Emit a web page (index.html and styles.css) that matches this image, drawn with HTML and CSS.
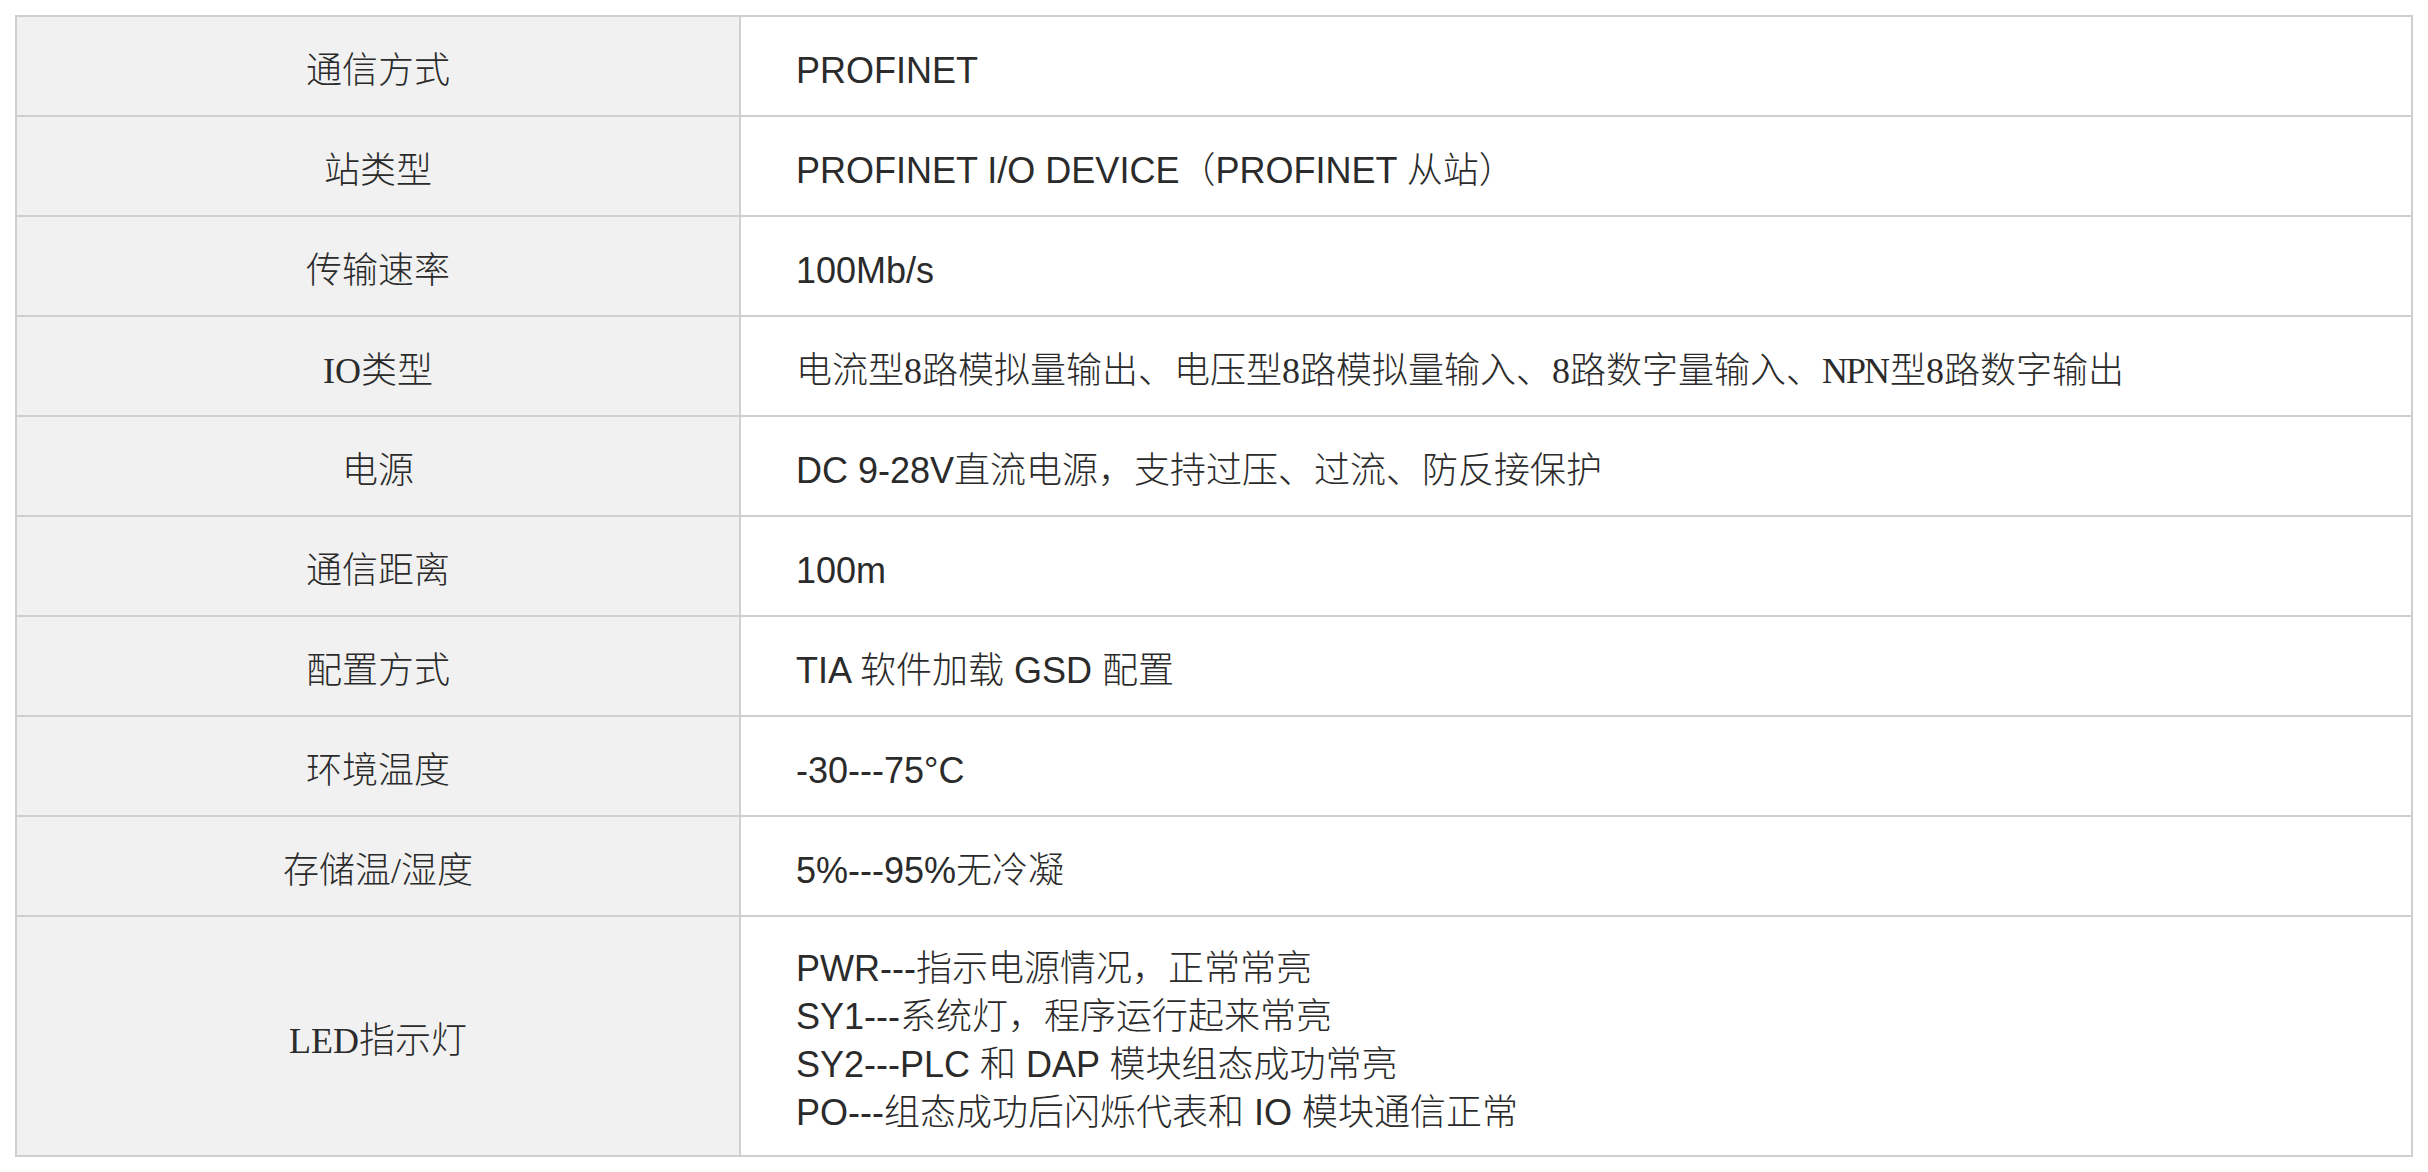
FILE: index.html
```html
<!DOCTYPE html>
<html lang="zh-CN">
<head>
<meta charset="utf-8">
<title>参数表</title>
<link rel="stylesheet" href="styles.css">
</head>
<body>
<table class="spec">
  <tbody>
    <tr class="row"><td class="key">通信方式</td><td class="val">PROFINET</td></tr>
    <tr class="row"><td class="key">站类型</td><td class="val">PROFINET I/O DEVICE（PROFINET 从站）</td></tr>
    <tr class="row"><td class="key">传输速率</td><td class="val">100Mb/s</td></tr>
    <tr class="row"><td class="key">IO类型</td><td class="val serif">电流型8路模拟量输出、电压型8路模拟量输入、8路数字量输入、<span class="narrow">NPN</span>型8路数字输出</td></tr>
    <tr class="row"><td class="key">电源</td><td class="val">DC 9-28V直流电源，支持过压、过流、防反接保护</td></tr>
    <tr class="row"><td class="key">通信距离</td><td class="val">100m</td></tr>
    <tr class="row"><td class="key">配置方式</td><td class="val">TIA 软件加载 GSD 配置</td></tr>
    <tr class="row"><td class="key">环境温度</td><td class="val">-30---75°C</td></tr>
    <tr class="row"><td class="key">存储温/湿度</td><td class="val">5%---95%无冷凝</td></tr>
    <tr class="row-tall"><td class="key">LED指示灯</td><td class="val multi">PWR---指示电源情况，正常常亮<br>SY1---系统灯，程序运行起来常亮<br>SY2---PLC 和 DAP 模块组态成功常亮<br>PO---组态成功后闪烁代表和 IO 模块通信正常</td></tr>
  </tbody>
</table>
</body>
</html>
```

FILE: styles.css
```css
html, body {
  margin: 0;
  padding: 0;
  background: #ffffff;
}

body {
  padding: 15px;
}

.spec {
  border-collapse: separate;
  border-spacing: 0;
  border-top: 2px solid #cfcfcf;
  border-left: 2px solid #cfcfcf;
  width: 2398px;
  table-layout: fixed;
  color: #2b2b2b;
}

.spec td {
  border-right: 2px solid #cfcfcf;
  border-bottom: 2px solid #cfcfcf;
  padding: 9px 0 0 0;
  vertical-align: middle;
  font-size: 36px;
  line-height: 48px;
}

.row td {
  height: 89px;
}

.row-tall td {
  height: 229px;
}

.key {
  width: 722px;
  background: #f1f1f1;
  text-align: center;
  font-family: "Liberation Serif", "Noto Sans CJK SC", serif;
  font-weight: 300;
}

.spec td.val {
  background: #ffffff;
  text-align: left;
  padding-left: 55px;
  font-family: "Liberation Sans", "Noto Sans CJK SC", sans-serif;
  font-weight: 300;
}

.spec td.serif {
  font-family: "Liberation Serif", "Noto Sans CJK SC", serif;
}

.narrow {
  letter-spacing: -2px;
  margin-right: 2px;
}

.multi {
  line-height: 48px;
}
```
